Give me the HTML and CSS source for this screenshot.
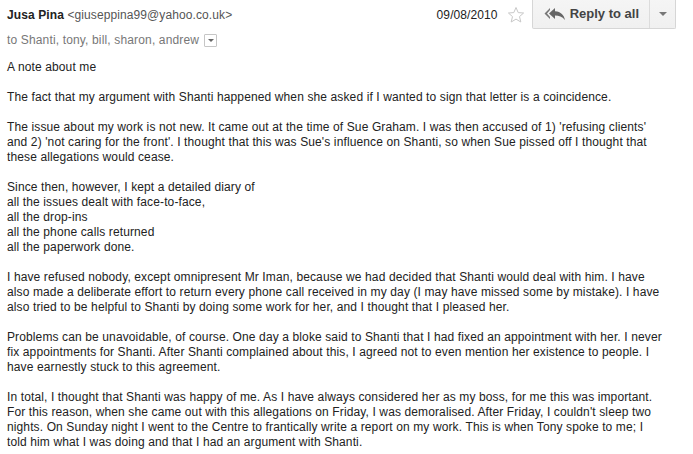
FILE: index.html
```html
<!DOCTYPE html>
<html>
<head>
<meta charset="utf-8">
<link rel="stylesheet" href="styles.css">
</head>
<body>
<div class="msg">
  <div class="head">
    <div class="from"><span class="name">Jusa Pina</span> <span class="email">&lt;giuseppina99@yahoo.co.uk&gt;</span></div>
    <div class="date">09/08/2010</div>
    <svg class="star" width="18" height="18" viewBox="0 0 18 18"><polygon points="9,1.5 11.2,6.6 16.6,7 12.5,10.6 13.8,16 9,13.1 4.2,16 5.5,10.6 1.4,7 6.8,6.6" fill="#fff" stroke="#c8c8c8" stroke-width="1"/></svg>
    <div class="btn">
      <div class="btn-main">
        <svg class="reply-icon" width="24" height="14" viewBox="0 0 24 14"><path d="M6 1 L0.5 6.5 L6 12 L6 10 L3 6.5 L6 3 Z" fill="#777"/><path d="M11 1 L5 6.5 L11 12 L11 8.6 C15 8.6 18 9.6 21 13 C20 8 17 4.6 11 4.2 Z" fill="#666"/></svg>
        <span>Reply to all</span>
      </div>
      <div class="btn-more"><span class="caret"></span></div>
    </div>
  </div>
  <div class="to">to Shanti, tony, bill, sharon, andrew <span class="drop"><span class="caret small"></span></span></div>
  <div class="body">
    <p>A note about me</p>
    <p>The fact that my argument with Shanti happened when she asked if I wanted to sign that letter is a coincidence.</p>
    <p>The issue about my work is not new. It came out at the time of Sue Graham. I was then accused of 1) 'refusing clients'<br>and 2) 'not caring for the front'. I thought that this was Sue's influence on Shanti, so when Sue pissed off I thought that<br>these allegations would cease.</p>
    <p>Since then, however, I kept a detailed diary of<br>all the issues dealt with face-to-face,<br>all the drop-ins<br>all the phone calls returned<br>all the paperwork done.</p>
    <p>I have refused nobody, except omnipresent Mr Iman, because we had decided that Shanti would deal with him. I have<br>also made a deliberate effort to return every phone call received in my day (I may have missed some by mistake). I have<br>also tried to be helpful to Shanti by doing some work for her, and I thought that I pleased her.</p>
    <p>Problems can be unavoidable, of course. One day a bloke said to Shanti that I had fixed an appointment with her. I never<br>fix appointments for Shanti. After Shanti complained about this, I agreed not to even mention her existence to people. I<br>have earnestly stuck to this agreement.</p>
    <p>In total, I thought that Shanti was happy of me. As I have always considered her as my boss, for me this was important.<br>For this reason, when she came out with this allegations on Friday, I was demoralised. After Friday, I couldn't sleep two<br>nights. On Sunday night I went to the Centre to frantically write a report on my work. This is when Tony spoke to me; I<br>told him what I was doing and that I had an argument with Shanti.</p>
  </div>
</div>
</body>
</html>
```
FILE: styles.css
```css
html, body {
  margin: 0;
  padding: 0;
  background: #fff;
}
body {
  font-family: "Liberation Sans", Arial, sans-serif;
  font-size: 12px;
  color: #222;
}
.msg {
  padding: 0 17px 0 7px;
}
.head {
  display: flex;
  align-items: center;
  height: 29px;
}
.from {
  flex: 1;
  white-space: nowrap;
  letter-spacing: 0.1px;
}
.name {
  font-weight: bold;
  color: #222;
}
.email {
  color: #555;
}
.date {
  color: #222;
  margin-right: 9px;
  letter-spacing: 0.1px;
}
.star {
  display: block;
  margin-right: 7px;
}
.btn {
  display: flex;
  height: 30px;
  margin-top: -1px;
  border: 1px solid #d6d6d6;
  border-top: none;
  border-radius: 0 0 2px 2px;
  background: linear-gradient(#f5f5f5, #f0f0f0);
  box-sizing: border-box;
}
.btn-main {
  display: flex;
  align-items: center;
  padding: 0 10px 0 11px;
  font-size: 13px;
  font-weight: bold;
  color: #444;
  border-right: 1px solid #dcdcdc;
}
.reply-icon {
  display: block;
  margin-right: 2px;
}
.btn-more {
  width: 25px;
  display: flex;
  align-items: center;
  justify-content: center;
}
.caret {
  width: 0;
  height: 0;
  border-left: 4px solid transparent;
  border-right: 4px solid transparent;
  border-top: 4px solid #777;
}
.to {
  color: #777;
  margin-top: 3px;
  height: 16px;
  display: flex;
  align-items: center;
  letter-spacing: 0.15px;
}
.drop {
  display: inline-flex;
  align-items: center;
  justify-content: center;
  width: 11px;
  height: 11px;
  border: 1px solid #c6c6c6;
  border-radius: 1px;
  margin-left: 5px;
  background: #fff;
}
.caret.small {
  border-left-width: 3px;
  border-right-width: 3px;
  border-top-width: 3px;
  border-top-color: #666;
}
.body {
  margin-top: 12px;
  line-height: 15px;
  letter-spacing: 0.12px;
  white-space: nowrap;
}
.body p {
  margin: 0 0 15px 0;
}
```
